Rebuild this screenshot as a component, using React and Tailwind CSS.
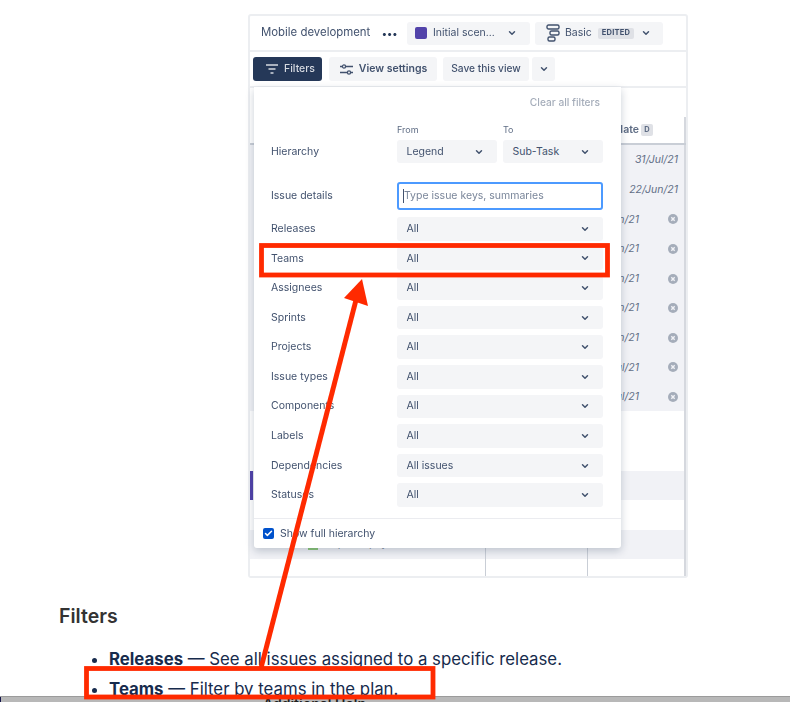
import React from 'react';
import { ChevronDown, Check } from 'lucide-react';

const filterRows = [
    ['Releases', 'All'],
    ['Teams', 'All'],
    ['Assignees', 'All'],
    ['Sprints', 'All'],
    ['Projects', 'All'],
    ['Issue types', 'All'],
    ['Components', 'All'],
    ['Labels', 'All'],
    ['Dependencies', 'All issues'],
    ['Statuses', 'All'],
];

const dates = ['31/Jul/21', '22/Jun/21', '14/Jun/21', '18/Jun/21', '14/Jun/21', '11/Jun/21', '16/Jun/21', '12/Jul/21', '12/Jul/21'];
const lowerRows = ['bg-white', 'bg-white', 'bg-[#f1f2f6]', 'bg-white', 'bg-[#f1f2f6]'];

const Chevron = ({ className = '' }) => (
    <ChevronDown size={10} strokeWidth={3.5} className={`text-[#42526e] ${className}`} />
);

const Select = ({ value, className = '' }) => (
    <div className={`flex items-center justify-between rounded-[3px] bg-[#f4f5f7] pl-[9.5px] pr-[13px] text-[10.5px] text-[#42526e] ${className}`}>
        <span>{value}</span>
        <Chevron />
    </div>
);

const ClearIcon = () => (
    <svg width="10" height="10" viewBox="0 0 10 10">
        <circle cx="5" cy="5" r="5" fill="#a5adba" />
        <path d="M3.3 3.3l3.4 3.4M6.7 3.3l-3.4 3.4" stroke="#f1f2f6" strokeWidth="1.4" />
    </svg>
);

const Cells = ({ children }) => (
    <>
        <div className="w-[236px] border-r border-[#c9ced6]" />
        <div className="w-[102px] border-r border-[#c9ced6]" />
        <div className="flex flex-1 items-center justify-end">{children}</div>
    </>
);

const FilterPanel = () => (
    <div className="absolute top-[71px] left-[4px] z-10 flex h-[461px] w-[367px] flex-col rounded-b-[3px] bg-white shadow-[0_3px_8px_rgba(9,30,66,0.22)]">
        <div className="flex h-[23px] items-end justify-end pr-[21px] text-[10.2px] leading-[15px] font-medium text-[#a5adba]">
            Clear all filters
        </div>

        <div className="mt-[15px] flex pl-[143px] text-[9px] leading-[10px] text-[#5e6c84]">
            <span className="w-[106px]">From</span>
            <span>To</span>
        </div>
        <div className="mt-[5px] flex items-center pl-[17px] text-[10.5px] text-[#42526e]">
            <span className="w-[126px]">Hierarchy</span>
            <div className="flex gap-[6px]">
                <Select value="Legend" className="h-[23px] w-[100px]" />
                <Select value="Sub-Task" className="h-[23px] w-[100px]" />
            </div>
        </div>

        <div className="mt-[19px] flex items-center pl-[17px] text-[10.5px] text-[#42526e]">
            <span className="w-[126px]">Issue details</span>
            <div className="flex h-[28px] w-[206px] items-center rounded-[3px] border-2 border-[#4c9aff] pl-[4px] text-[10.5px] text-[#7a869a]">
                <span className="h-[14px] w-px bg-[#42526e]" />
                Type issue keys, summaries
            </div>
        </div>

        <div className="mt-[7px] flex flex-col gap-[6px] pl-[17px]">
            {filterRows.map(([label, value]) => (
                <div key={label} className="flex h-[23.6px] items-center text-[10.5px] text-[#42526e]">
                    <span className="w-[126px]">{label}</span>
                    <Select value={value} className="h-full w-[206px]" />
                </div>
            ))}
        </div>

        <div className="mt-auto flex h-[30px] items-center gap-[6px] border-t border-[#ebecf0] pl-[9px] text-[10.5px] text-[#42526e]">
            <span className="flex h-[11px] w-[11px] items-center justify-center rounded-[2px] bg-[#0052cc]">
                <Check size={9} strokeWidth={4} className="text-white" />
            </span>
            Show full hierarchy
        </div>
    </div>
);

const PlanCard = () => (
    <div className="relative ml-[248px] mt-[14px] flex h-[564px] w-[440px] shrink-0 flex-col rounded-[3px] border-2 border-[#eceef1] blur-[0.45px]">
        {/* Title bar */}
        <div className="flex h-[36px] items-center border-b-2 border-[#eceef1] pl-[11px]">
            <span className="w-[121px] text-[11.4px] text-[#42526e]">Mobile development</span>
            <span className="w-[25px] text-[10px] font-bold tracking-[0.5px] text-[#253858]">•••</span>
            <div className="flex h-[23px] w-[123px] items-center rounded-[3px] bg-[#f4f5f7] pl-[8px] text-[10.5px] text-[#42526e]">
                <span className="h-[12px] w-[12px] rounded-[2px] bg-[#5243aa]" />
                <span className="ml-[6px] w-[74px]">Initial scen...</span>
                <Chevron />
            </div>
            <div className="ml-[5px] flex h-[23px] w-[128px] items-center rounded-[3px] bg-[#f4f5f7] pl-[11px] text-[10.5px] text-[#42526e]">
                <svg width="14" height="18" viewBox="0 0 14 18" fill="none" stroke="#42526e" strokeWidth="1.4">
                    <rect x="1" y="1" width="12" height="4" rx="1.5" />
                    <rect x="4" y="7" width="9" height="4" rx="1.5" />
                    <rect x="2" y="13" width="7" height="4" rx="1.5" />
                </svg>
                <span className="ml-[5px] w-[33px]">Basic</span>
                <span className="flex h-[11px] w-[36px] items-center justify-center rounded-[2px] bg-[#dfe1e6] text-[7.5px] font-bold tracking-[0.2px] text-[#42526e]">EDITED</span>
                <Chevron className="ml-[7px]" />
            </div>
        </div>

        {/* Toolbar */}
        <div className="flex h-[36px] items-center border-b-2 border-[#eceef1] pl-[3px] text-[10.5px] font-semibold text-[#42526e]">
            <div className="flex h-[24px] w-[69px] items-center gap-[5px] rounded-[3px] bg-[#253858] pl-[12px] font-medium text-[#d5d9e0]">
                <svg width="14" height="10" viewBox="0 0 14 10" stroke="#d5d9e0" strokeWidth="1.4">
                    <path d="M1 1h12M3.5 5h7M5.5 9h3" />
                </svg>
                Filters
            </div>
            <div className="ml-[7px] flex h-[24px] w-[108px] items-center justify-center gap-[5px] rounded-[3px] bg-[#f4f5f7]">
                <svg width="15" height="11" viewBox="0 0 15 11" fill="none" stroke="#42526e" strokeWidth="1.3">
                    <path d="M1 2.5h2M7 2.5h7M1 8.5h7M12 8.5h2" />
                    <circle cx="5" cy="2.5" r="1.6" />
                    <circle cx="10" cy="8.5" r="1.6" />
                </svg>
                View settings
            </div>
            <div className="ml-[6px] flex h-[24px] w-[86px] items-center justify-center rounded-[3px] bg-[#f4f5f7] text-[10.2px] font-medium">Save this view</div>
            <div className="ml-[3px] flex h-[24px] w-[23px] items-center justify-center rounded-[3px] bg-[#f4f5f7]">
                <Chevron />
            </div>
        </div>

        {/* Column heading */}
        <div className="relative flex h-[57px] items-center justify-end border-b-2 border-[#c9ced6] pr-[33px] pt-[28px] text-[10.5px] font-semibold text-[#5e6c84]">
            Due date
            <span className="ml-[2px] flex h-[12px] w-[12px] items-center justify-center rounded-[2px] bg-[#dfe1e6] text-[7.5px] font-bold">D</span>
            <span className="absolute top-[29px] right-0 h-[26px] w-[2px] bg-[#d5d8de]" />
        </div>

        {/* Rows behind the panel */}
        <div className="flex flex-1 flex-col border-r-2 border-[#d5d8de]">
            {dates.map((date, i) => (
                <div key={i} className="flex h-[29.6px] bg-[#f1f2f6] pt-px text-[10.5px] text-[#626f86]">
                    <Cells>
                        {i < 2 ? (
                            <span className="pr-[6px] italic">{date}</span>
                        ) : (
                            <>
                                <span className="italic">{date}</span>
                                <span className="ml-[29px] mr-[6px]"><ClearIcon /></span>
                            </>
                        )}
                    </Cells>
                </div>
            ))}
            {lowerRows.map((bg, i) => (
                <div key={i} className={`relative flex h-[29.6px] ${bg}`}>
                    {i === 2 && <span className="absolute top-0 left-0 h-[30px] w-[3px] bg-[#5243aa]" />}
                    <Cells />
                    {i === 4 && (
                        <>
                            <span className="absolute top-[13px] left-[58px] h-[7px] w-[10px] bg-[#8fc97a]" />
                            <span className="absolute top-[7px] left-[80px] text-[10.5px] leading-[14px] text-[#8993a4]">Update payment</span>
                        </>
                    )}
                </div>
            ))}
            <div className="flex flex-1 bg-white">
                <Cells />
            </div>
        </div>

        <FilterPanel />
    </div>
);

const Annotations = () => (
    <div className="pointer-events-none absolute inset-0 z-20">
        <svg width="790" height="702" viewBox="0 0 790 702" fill="none">
            <rect x="261.5" y="245.5" width="346" height="29.5" stroke="#ff2a00" strokeWidth="4.8" />
            <rect x="86.5" y="668.5" width="346.5" height="28.5" stroke="#ff2a00" strokeWidth="4.8" />
            <path d="M261 668L356 300" stroke="#ff2a00" strokeWidth="5" />
            <polygon points="362,279 344,298 368,306" fill="#ff2a00" />
        </svg>
    </div>
);

export default function App() {
    return (
        <div className="relative flex h-[702px] w-[790px] flex-col overflow-hidden bg-white font-['Inter',sans-serif]">
            <PlanCard />

            <h3 className="ml-[59px] mt-[26px] shrink-0 text-[19.5px] leading-[24px] font-semibold text-[#333333]">Filters</h3>
            <ul className="mt-[16px] ml-[109px] shrink-0 list-disc text-[16.8px] leading-[30px] text-[#172b4d]">
                <li><strong className="font-bold">Releases</strong> — See all issues assigned to a specific release.</li>
                <li><strong className="font-bold">Teams</strong> — Filter by teams in the plan.</li>
            </ul>

            {/* Window edge at the bottom of the capture */}
            <div className="absolute right-0 bottom-0 left-0 z-10 h-[6px] overflow-hidden border-t border-[#9b9b9b] bg-[#b8b8b8] pl-[263px] text-[14px] leading-[14px] font-semibold text-[#1f1f1f]">
                <span className="absolute top-0 left-0 h-full w-[1px] bg-[#14144a]" />
                Additional Help
            </div>

            <Annotations />
        </div>
    );
}
